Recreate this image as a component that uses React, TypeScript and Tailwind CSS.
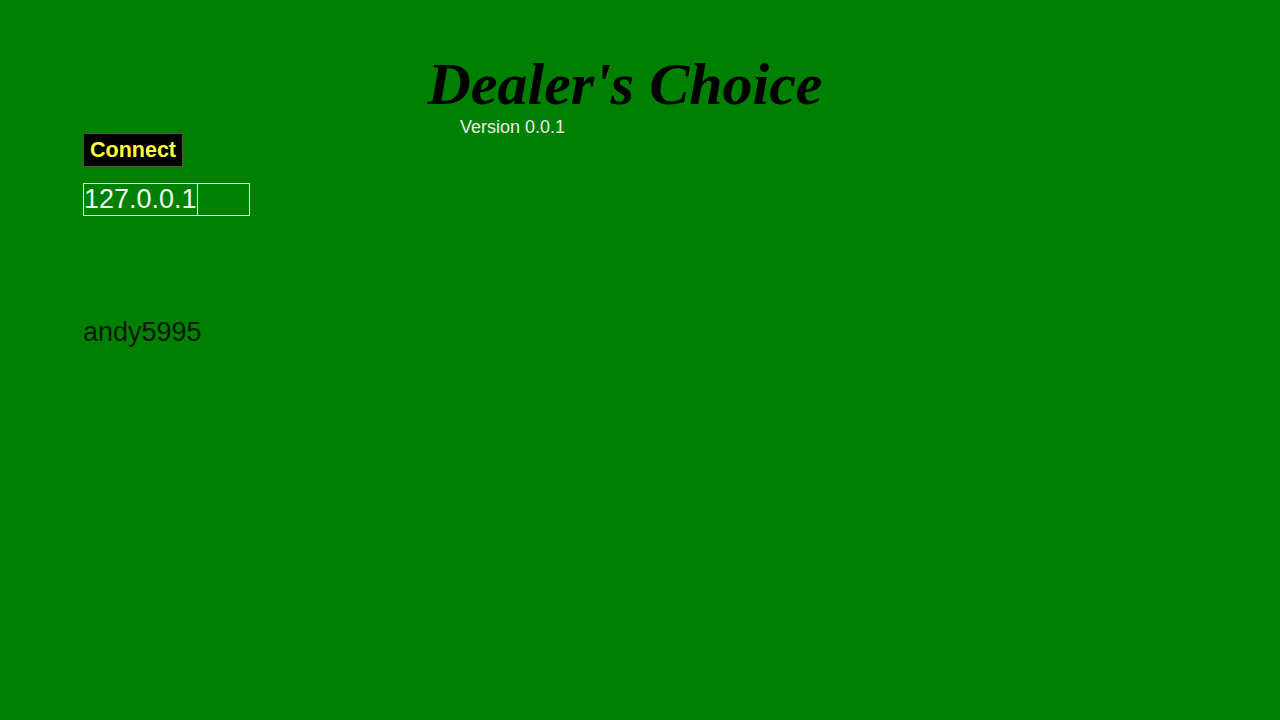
import React from "react";

const App: React.FC = () => {
  return (
    <div className="min-h-screen w-full bg-[#008000] font-['Liberation_Sans',Arial,sans-serif]">
      <div className="pl-[83px] pr-[113px] pt-[46px]">
        <h1 className="text-center font-['Liberation_Serif','Times_New_Roman',serif] text-[60px] font-bold italic leading-[76px] text-black">
          Dealer's Choice
        </h1>
        <div className="pl-[377px] text-[18px] leading-[20px] text-[#e8f0e8] -mt-[5px]">Version 0.0.1</div>
        <button className="mt-[-4px] flex h-[34px] w-[100px] items-center justify-center border border-[#555] bg-black text-[21.5px] font-bold text-[#ffff33]">
          Connect
        </button>
        <div className="mt-[16px] flex h-[33px] w-[167px] items-center border border-[#e0f0e0]">
          <span className="text-[27px] leading-none text-[#f0f8f0]">127.0.0.1</span>
          <span className="h-full border-l border-[#e0f0e0]"></span>
        </div>
        <div className="mt-[100px] text-[27px] leading-[32px] text-[#0a1a0a]">andy5995</div>
      </div>
    </div>
  );
};

export default App;
